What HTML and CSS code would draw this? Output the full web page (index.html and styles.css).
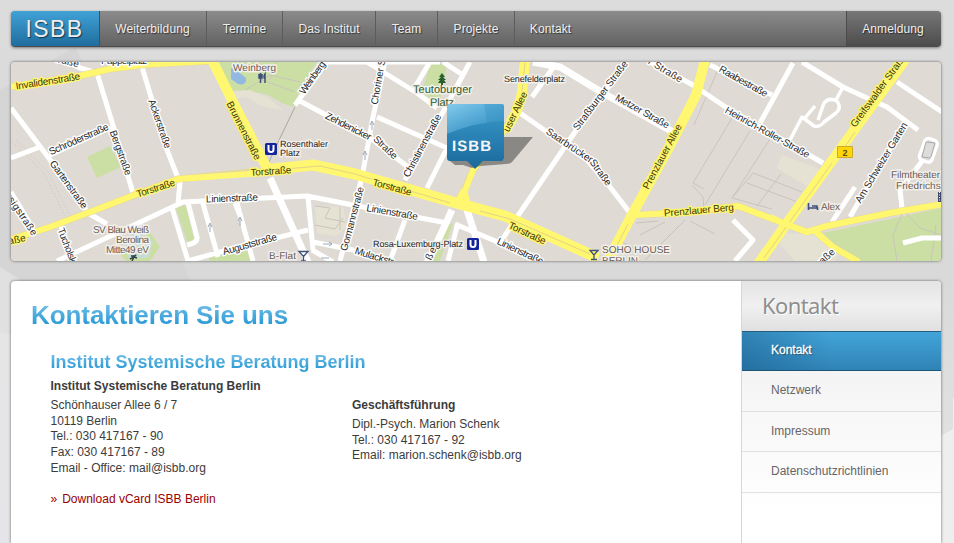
FILE: index.html
```html
<!DOCTYPE html>
<html lang="de">
<head>
<meta charset="utf-8">
<title>ISBB – Kontakt</title>
<link rel="stylesheet" href="styles.css">
</head>
<body>
<svg class="backdrop" viewBox="0 0 954 543" aria-hidden="true">
  <defs><linearGradient id="bg" x2="0" y2="1"><stop stop-color="#dcdcdc"/><stop offset=".5" stop-color="#d9d9d9"/><stop offset=".8" stop-color="#e0e0e0"/></linearGradient>
  <linearGradient id="fade" x2="0" y2="1"><stop stop-color="#e5e5e6"/><stop offset="1" stop-color="#e5e5e9"/></linearGradient></defs>
  <path fill="url(#bg)" d="M0 0h954v543H0z"/>
  <path fill="#d5d5d5" d="M75 47 181 260 190 281H22L0 267V90z"/>
  <path fill="#e0e0e0" d="M0 267 22 281V336L0 332z"/>
  <path fill="url(#fade)" d="M0 332 60 345V543H0z"/>
  <path fill="#eeeeef" d="M954 398V543H900V455L941 436 953 429V398z"/>
</svg>
<div class="page">
  <nav class="nav">
    <a class="logo" href="#">ISBB</a>
    <a class="w1" href="#">Weiterbildung</a><a class="w2" href="#">Termine</a><a class="w3" href="#">Das Institut</a><a class="w4" href="#">Team</a><a class="w5" href="#">Projekte</a><a class="last" href="#">Kontakt</a>
    <a class="login" href="#">Anmeldung</a>
  </nav>

  <div class="map">
  <svg viewBox="11 62 930 199">
    <defs>
      <linearGradient id="pin" x2="0" y2="1"><stop stop-color="#3a9bcd"/><stop offset="1" stop-color="#1b699b"/></linearGradient>
      <linearGradient id="gloss" x1="0" y1="0" x2="1" y2="1"><stop stop-color="#a0dcf8" stop-opacity=".75"/><stop offset="1" stop-color="#4ba8d8" stop-opacity=".2"/></linearGradient>
    </defs>
    <path fill="#dfdbd4" d="M11 62h930v199H11z"/>
    <!-- parks and plots -->
    <g fill="#cbdfa4">
      <path d="M87 157 110 146 121 167 97 178z"/>
      <path d="M219 62H317L301 88 293 107 282 103 268 95 245 90 231 91z"/>
      <path d="M430 64h17l-8 42-17-14z"/>
      <path d="M823 233 942 208V261H857L836 247z"/>
      <path d="M176 208 186 205 194 240 187 242z"/>
      <path d="M118 252 150 232 160 247 150 261H126z"/>
      <path d="M447 225 453 223 440 261H430zM230 255l22-5 3 11h-25zM208 257l26-5 5 9h-29z"/>
    </g>
    <path fill="#e6e2d3" d="M232 92 250 90 268 98 283 110 262 106 247 97 234 99zM782 155 822 170 808 187 777 168zM783 233 823 235 842 252 834 261H795L780 244zM315 206 343 207 347 227 335 236 317 233z"/>
    <path fill="#c7ddd4" d="M125 240 138 230 153 242 148 258H128z"/>
    <path fill="#94b8e4" d="M231 68 236 70 246 78Q247 86 238 84L231 79z"/>
    <g class="trace">
      <path d="M720 65 694 125M732 118 693 183 704 189M750 131 705 205M770 139 732 198 772 209M781 174 757 206M753 173 802 192M747 183 800 203M753 173 732 198M692 185 703 197 704 210M315 206 330 208 325 218 345 222M315 225 335 229 343 218M340 207V230M636 223 658 221M640 235 665 222M645 260 685 220M615 238 637 250M690 221 715 234M256 62 262 80 295 92M276 62 270 80M245 90 270 75 300 82M903 212 893 235 897 261M905 212 920 228 942 235M936 225 931 261"/>
      <path stroke="#aaa6a0" d="M295 107 280 138 269 162"/>
      <path stroke-dasharray="1 2" d="M11 140 44 173 67 220M16 140 48 172 71 218"/>
    </g>
    <!-- side streets -->
    <g class="casing">
      <path d="M11 108 48 157 88 213 107 224M11 158 40 147M50 155 112 127M62 60 80 68 97 73 112 122 133 193M142 67 167 150 180 183 178 203M57 261 117 233 183 202 203 201 307 196 363 207 447 223M455 224 500 243 540 262M172 208 188 261M188 203 197 237Q198 243 187 245M202 200 218 257M188 261 220 252 308 230M60 223 73 262M237 203 253 261M235 203 241 218M11 192 35 232M308 197 313 250M313 242 353 250 380 261M312 250 333 262M385 62 373 117 362 177 340 261M327 62 295 105M298 100 373 140 408 167M377 117 447 148 427 188M470 62 443 112 405 180M367 62 417 93 437 108M430 62 415 87M443 62 463 75M405 220 390 261M458 223 448 261M627 62 575 132 515 220 500 243M520 113 587 160 607 183 630 213M650 62 693 85M555 65 532 97M710 65 772 95M793 63 760 123M690 83 727 108 823 163M802 62 843 87 887 107 918 130M897 82 942 112M905 123 858 203 850 217M855 187 832 222M923 160 900 190 902 208M733 220 753 240 735 261M903 243 922 238 942 238M320 62H440"/>
      <path class="narrow" d="M790 140 802 117 814 126Q819 128 824 122L836 113Q842 108 837 101 829 97 824 103L818 120M815 106 805 118M843 87 836 100"/>
      <path class="wide" d="M270 178 308 262M452 210 428 262M467 210 484 262M533 62 560 67 603 93 673 132"/>
    </g>
    <rect x="922" y="139" width="13" height="23" rx="4" transform="rotate(20 929 150)" fill="#dedcda" stroke="#fff" stroke-width="3.5"/>
    <path fill="none" stroke="#aaa" d="M926 142 922 157M935 143 931 157M926 142l9 1M922 157l9 1"/>
    <!-- main roads -->
    <g class="main">
      <path class="edge" d="M9 87 75 77 110 69 145 64.5 210 61M9 240 50 227 90 212 137 194 178 179 262 171 320 166 355 173 460 204 505 216 595 257M212 60 234 104 267 168M525 60 522 92Q519 110 510 123L473 170 463 193 468 207M464 190 457 203M705 60 696 95 673 140 633 213 606 264M635 215 690 212 738 206 783 223 807 232 827 226 890 213 943 204M815 231 833 247 859 262M905 60 847 140 787 223 758 264"/>
      <path class="thin" d="M9 87 75 77 110 69 145 64.5 210 61M9 240 50 227 90 212 137 194 178 179 262 173M464 193 473 170 512 120M464 190 469 208M464 190 456 205M635 215 690 212 738 206 783 223 807 232 827 226 890 213 943 204M815 231 833 247 859 262"/>
      <path class="fat" d="M212 60 234 104 267 168M525 60 522 92Q519 110 510 123M705 60 696 95 673 140 633 213 606 264M905 60 847 140 787 223 758 264"/>
      <path class="double" d="M262 170 313 165 355 174 460 204 505 216 598 258"/>
      <path class="median" d="M285 169 320 166 355 174 450 203M480 211 510 219 590 254M628 224 609 261M855 132 842 151M832 163 764 258M525 63 522 92"/>
      <path class="thin" d="M770 217 783 223 807 232 827 226"/>
    </g>
    <path fill="none" stroke="#9eabb8" d="M240 218v8m-2-5 2-4 2 4M372 122v8m-2-5 2-4 2 4M365 151v9m-2-5 2-4 2 4M323 244h9m-3-2 3 2-3 2M321 258h8M210 224v8m-2-5 2-4 2 4"/>
    <!-- labels: halos first, lettering on top -->
    <use class="halo" href="#labels"/>
    <g class="ink"><g id="labels">
    <g class="names">
      <text class="road" transform="translate(48 82) rotate(-9)" textLength="65">Invalidenstraße</text>
      <text transform="translate(79 140) rotate(-24)" textLength="64">Schröderstraße</text>
      <text transform="translate(120 153) rotate(70)" textLength="47">Bergstraße</text>
      <text transform="translate(159 124) rotate(71)" textLength="51">Ackerstraße</text>
      <text transform="translate(68 185) rotate(54)" textLength="57">Gartenstraße</text>
      <text transform="translate(21 215) rotate(56)" textLength="48">rsigstraße</text>
      <text transform="translate(68 250) rotate(69)" textLength="46">Tucholskys</text>
      <text transform="translate(67 62) rotate(14)" textLength="24">traße</text>
      <text transform="translate(124 61)" textLength="46">Pappelplatz</text>
      <text class="road" transform="translate(156 189) rotate(-18)" textLength="40">Torstraße</text>
      <text class="road" transform="translate(14 241) rotate(-12)" textLength="24">traße</text>
      <text class="road" transform="translate(243 131) rotate(63)" textLength="64">Brunnenstraße</text>
      <text class="road" transform="translate(271 172) rotate(-4)" textLength="41">Torstraße</text>
      <text class="road" transform="translate(392 188) rotate(15)" textLength="40">Torstraße</text>
      <text class="road" transform="translate(527 234) rotate(25)" textLength="40">Torstraße</text>
      <text transform="translate(232 199) rotate(-2)" textLength="52">Linienstraße</text>
      <text transform="translate(392 213) rotate(10)" textLength="52">Linienstraße</text>
      <text transform="translate(520 252) rotate(25)" textLength="50">Linienstraße</text>
      <text transform="translate(250 245) rotate(-16)" textLength="56">Auguststraße</text>
      <text transform="translate(313 78) rotate(-55)" textLength="38">Weinberg</text>
      <text transform="translate(379 82) rotate(-80)" textLength="46">Choriner S</text>
      <text transform="translate(348 127) rotate(27)" textLength="50">Zehdenicker</text>
      <text transform="translate(385 148) rotate(43)" textLength="29">Straße</text>
      <text transform="translate(423 146) rotate(-62)" textLength="70">Christinenstraße</text>
      <text transform="translate(353 219) rotate(-75)" textLength="66">Gormannstraße</text>
      <text transform="translate(374 257) rotate(17)" textLength="40">Mulackstr</text>
      <text transform="translate(430 257) rotate(-65)" textLength="20">aße</text>
      <text class="road" transform="translate(516 112) rotate(-64)" textLength="43">user Allee</text>
      <text transform="translate(601 96) rotate(-53)" textLength="84">Straßburger Straße</text>
      <text transform="translate(642 112) rotate(29)" textLength="60">Metzer Straße</text>
      <text transform="translate(569 146) rotate(34)" textLength="54">Saarbrücker</text>
      <text transform="translate(600 173) rotate(54)" textLength="30">Straße</text>
      <text transform="translate(665 71) rotate(31)" textLength="38">r Straße</text>
      <text class="road" transform="translate(663 157) rotate(-62)" textLength="72">Prenzlauer Allee</text>
      <text class="road" transform="translate(699 211) rotate(-5)" textLength="70">Prenzlauer Berg</text>
      <text transform="translate(743 82) rotate(29)" textLength="54">Raabestraße</text>
      <text transform="translate(767 133) rotate(29)" textLength="95">Heinrich-Roller-Straße</text>
      <text class="road" transform="translate(879 91) rotate(-54)" textLength="88">Greifswalder Straße</text>
      <text transform="translate(882 163) rotate(-59)" textLength="92">Am Schweizer Garten</text>
      <text transform="translate(825 259) rotate(-42)" textLength="24">traße</text>
    </g>
    <g class="places">
      <g class="dark"><text x="280" y="147" textLength="48">Rosenthaler</text><text x="280" y="156" textLength="20">Platz</text>
      <text x="504" y="82" textLength="61">Senefelderplatz</text><text x="373" y="247" textLength="90">Rosa-Luxemburg-Platz</text></g>
      <text x="233" y="71" textLength="43">Weinberg</text><text x="269" y="259" textLength="27">B-Flat</text>
      <text x="93" y="233" textLength="56">SV Blau Weiß</text><text x="116" y="243" textLength="33">Berolina</text><text x="106" y="253" textLength="43">Mitte49 eV</text>
      <text x="602" y="253" textLength="68">SOHO HOUSE</text><text x="602" y="264" textLength="36">BERLIN</text>
      <text x="821" y="210" textLength="19">Alex</text><text x="891" y="178" textLength="49">Filmtheater</text><text x="896" y="189" textLength="56">Friedrichsha</text>
      <g class="park"><text x="413" y="93" textLength="59">Teutoburger</text><text x="430" y="106" textLength="24">Platz</text></g>
    </g>
    </g></g>
    <g fill="#14259b"><rect x="265" y="143" width="12" height="12" rx="1.5"/><rect x="467" y="238" width="12" height="12" rx="1.5"/></g>
    <path fill="none" stroke="#fff" stroke-width="2" d="M268.500 145v4.500a2.500 2.500 0 0 0 5 0V145M470.500 240v4.500a2.500 2.500 0 0 0 5 0V240"/>
    <path fill="#26612d" d="m442 73 3 4h-2l3 3h-2l2 3h-3v2h-2v-2h-3l2-3h-2l3-3h-2z"/>
    <g fill="none" stroke="#41507a" stroke-width="1.300"><path d="M299 251.500h9l-4.500 5zM303.500 256v5M301 261h5M590 250.500h8l-4 4.500zM594 255v4.500M591 259.500h6"/><path d="M259 74v4h3v-4M260.500 73v10M265 83v-9q-2 3 0 5" stroke-width="1.500"/><path d="M808.500 203v7M808.500 208h9v2M812 206h5v2" stroke-width="1.600"/></g>
    <path fill="#3e4869" d="M938 192h3v10h-3z"/><path stroke="#fff" stroke-dasharray="1 1.500" d="M939.500 192v10"/>
    <path fill="none" stroke="#344" stroke-width="1.400" d="M130 259l4-2-2 4M134 257l3 1M131 256l4 0"/><circle cx="135.500" cy="255.500" r="1" fill="#344"/>
    <path fill="#ffd60a" stroke="#cfab2c" d="M837.500 146.500h15v11h-15z"/><text class="route" x="845" y="156">2</text>
    <!-- pin -->
    <path fill="#444" fill-opacity=".55" d="M504 137H533L512 162Q510 164 506 164L480 166 472 168 463 165H455L450 161 504 160z"/>
    <path fill="url(#pin)" d="M450 104H501Q504 104 504 107V158Q504 161 501 161H483L475 169 467 161H450Q447 161 447 158V107Q447 104 450 104z"/>
    <path fill="url(#gloss)" d="M450 104H501Q504 104 504 107V121Q475 122 447 134V107Q447 104 450 104z"/>
    <path fill="#2a83b9" fill-opacity=".25" d="M484 104h20v18q-10-1-17 1z"/>
    <text class="pin-text" x="452" y="151" textLength="39">ISBB</text>
  </svg>
  </div>

  <div class="content">
    <main>
      <h1>Kontaktieren Sie uns</h1>
      <div class="entry">
        <h2>Institut Systemische Beratung Berlin</h2>
        <div class="columns">
          <div class="address">
            <h3 class="org">Institut Systemische Beratung Berlin</h3>
            <p>Schönhauser Allee 6 / 7<br>10119 Berlin<br>Tel.: 030 417167 - 90<br>Fax: 030 417167 - 89<br>Email - Office: mail@isbb.org</p>
            <a class="vcard" href="#"><span>»</span>Download vCard ISBB Berlin</a>
          </div>
          <div class="lead">
            <h3>Geschäftsführung</h3>
            <p>Dipl.-Psych. Marion Schenk<br>Tel.: 030 417167 - 92<br>Email: marion.schenk@isbb.org</p>
          </div>
        </div>
      </div>
    </main>
    <aside>
      <h4>Kontakt</h4>
      <a class="active" href="#">Kontakt</a>
      <a href="#">Netzwerk</a>
      <a href="#">Impressum</a>
      <a href="#">Datenschutzrichtlinien</a>
    </aside>
  </div>
</div>
</body>
</html>
```

FILE: styles.css
```css
* { box-sizing: border-box; }
body { margin: 0; background: #dadada; font: 12px/16px "Liberation Sans", Arial, sans-serif; color: #3c3c3c; }
a { text-decoration: none; color: inherit; }
h1, h2, h3, h4, p { margin: 0; }
.backdrop { position: absolute; top: 0; left: 0; width: 954px; height: 543px; z-index: -1; }
.page { width: 930px; height: 532px; margin: 11px 0 0 11px; }

.nav { display: flex; height: 36px; border-radius: 4px; overflow: hidden; background: linear-gradient(#8b8b8b, #626262); border-bottom: 1px solid #4b4b4b; box-shadow: 0 1px 3px rgba(0,0,0,.45); }
.nav a { display: flex; align-items: center; justify-content: center; color: #eee; font-size: 12px; letter-spacing: .1px; text-shadow: 1px 1px 1px rgba(0,0,0,.55); border-right: 1px solid #5c5c5c; }
.nav .logo { width: 89px; padding: 1px 1px 0 0; font-size: 23px; letter-spacing: 1.400px; background: linear-gradient(#40a2d6, #1f6d9e); border-right-color: #245a78; }
.nav .w1 { width: 107px; padding-right: 1px; }
.w2 { width: 76px; }
.w3 { width: 93px; }
.w4 { width: 62px; }
.w5 { width: 77px; }
.nav .last { width: 71px; border: 0; }
.nav .login { width: 95px; margin-left: auto; padding-right: 2px; background: linear-gradient(#777, #4c4c4c); border: 0; border-left: 1px solid #4b4b4b; }

.map { height: 199px; margin-top: 15px; border-radius: 4px; overflow: hidden; box-shadow: 0 0 3px rgba(0,0,0,.6); }
.map svg { display: block; width: 930px; height: 199px; font-family: "Liberation Sans", Arial, sans-serif; text-rendering: geometricPrecision; }
.trace { fill: none; stroke: #c9c4bb; stroke-width: 1; }
.casing { fill: none; stroke: #fff; stroke-width: 5; stroke-linejoin: round; }
.casing .narrow { stroke-width: 3.5; }
.casing .wide { stroke-width: 7; }
.main { fill: none; stroke: #fff770; stroke-linejoin: round; }
.main .edge { stroke: #e5d79b; stroke-width: 7; }
.main .thin { stroke-width: 6; }
.main .fat { stroke-width: 10; }
.main .double { stroke-width: 11; }
.main .median { stroke: #e2d386; stroke-width: 1; }
.halo { stroke-width: 2.8px; }
.ink { stroke-width: 0; }
.names text { font-size: 10px; fill: #292929; text-anchor: middle; stroke: #fff; stroke-linejoin: round; dominant-baseline: central; }
.names .road { stroke: #fff56e; fill: #3c3808; }
.places text { font-size: 10px; fill: #6b5c55; stroke: #f4f1ec; stroke-linejoin: round; }
.places .dark text { font-size: 9px; fill: #222; }
.places .park text { font-size: 11px; fill: #2c5b2d; }
.route { font-size: 9px; font-weight: bold; text-anchor: middle; fill: #65500c; }
.pin-text { font-size: 15px; font-weight: bold; fill: #f4f8fb; }

.content { display: flex; height: 262px; margin-top: 20px; background: #fff; border-radius: 4px 4px 0 0; box-shadow: 0 0 3px rgba(0,0,0,.6); clip-path: inset(-4px -4px 0 -4px); overflow: hidden; }
main { width: 730px; padding: 19px 0 0 20px; }
h1, h2 { color: transparent; background-clip: text; -webkit-background-clip: text; background-image: linear-gradient(#70bde7 15%, #2b9bd6 80%); }
h1 { width: max-content; font-size: 26px; line-height: 30px; letter-spacing: -.08px; }
h2 { width: max-content; font-size: 18px; line-height: 22px; }
.entry { padding: 21px 0 0 19.500px; }
.columns { display: flex; padding-top: 5px; }
.address { width: 301.500px; }
h3 { font-size: 12px; line-height: 16px; white-space: nowrap; margin-bottom: 3px; }
.address p, .lead p { line-height: 15.900px; padding-top: .6px; }
.lead { padding-top: 19px; }
.vcard { display: flex; gap: 5px; margin-top: 14px; color: #900; }

aside { width: 200px; background: linear-gradient(#f1f1f1 50px, #fff 230px); border-left: 1px solid #d6d6d6; }
h4 { height: 50px; padding-left: 20px; font: 22px/49px "Noto Sans", "Open Sans", sans-serif; letter-spacing: -.6px; color: #8f8f8f; text-shadow: 1px 1px 0 #fff; background: linear-gradient(#e4e4e4, #f0f0f0 50%, #e0e0e0); }
aside a { display: block; height: 40.500px; padding-left: 29px; line-height: 38px; color: #666; border-bottom: 1px solid #e1e1e1; }
aside .active { height: 40px; color: #fff; text-shadow: 1px 1px 1px rgba(0,0,0,.5); border-top: 1px solid #245f80; border-bottom: 1px solid #1e5575; background: linear-gradient(90deg, rgba(20,80,125,.4), transparent 45%), linear-gradient(#43a4d9, #2f83b6); line-height: 37px; -webkit-text-stroke: .3px #fff; }
```
